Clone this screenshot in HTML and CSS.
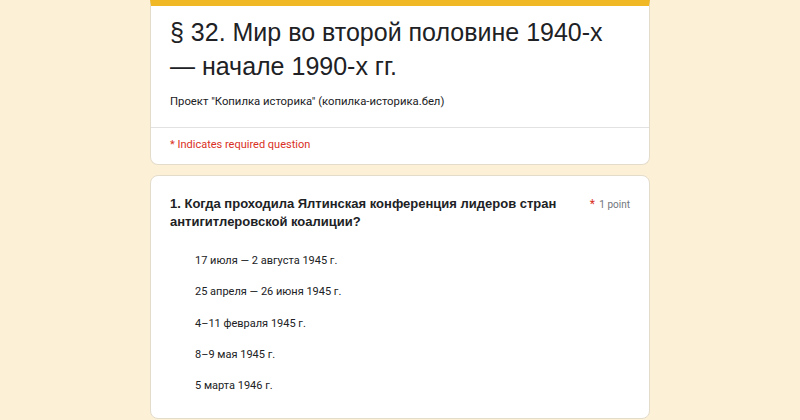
FILE: index.html
```html
<!DOCTYPE html>
<html lang="ru">
<head>
<meta charset="utf-8">
<title>§ 32</title>
<link rel="stylesheet" href="styles.css">
</head>
<body>
<main class="form">
  <section class="card header-card">
    <div class="header-main">
      <h1 class="title">§ 32. Мир во второй половине 1940-х — начале 1990-х гг.</h1>
      <p class="desc">Проект "Копилка историка" (копилка-историка.бел)</p>
    </div>
    <div class="header-note">* Indicates required question</div>
  </section>
  <section class="card question-card">
    <div class="q-head">
      <h2 class="q-title">1. Когда проходила Ялтинская конференция лидеров стран антигитлеровской коалиции?</h2>
      <div class="q-points"><span class="req">*</span> 1 point</div>
    </div>
    <ul class="options">
      <li>17 июля — 2 августа 1945 г.</li>
      <li>25 апреля — 26 июня 1945 г.</li>
      <li>4–11 февраля 1945 г.</li>
      <li>8–9 мая 1945 г.</li>
      <li>5 марта 1946 г.</li>
    </ul>
  </section>
</main>
</body>
</html>
```

FILE: styles.css
```css
html, body {
  margin: 0;
  padding: 0;
}
body {
  background: #fcf0d6;
  font-family: Roboto, "Liberation Sans", Arial, sans-serif;
  color: #202124;
  height: 420px;
  overflow: hidden;
}
.form {
  width: 500px;
  margin: 0 auto;
  display: flex;
  flex-direction: column;
  gap: 10px;
}
.card {
  background: #fff;
  border: 1px solid #e4dccb;
  border-radius: 8px;
}
.header-card {
  border-top: 6px solid #f1b826;
  border-top-left-radius: 0;
  border-top-right-radius: 0;
}
.header-main {
  padding: 9px 19px 18px;
  border-bottom: 1px solid #e2e2e2;
}
.title {
  margin: 0;
  font-family: "Liberation Sans", Arial, sans-serif;
  font-weight: 400;
  font-size: 25px;
  line-height: 34px;
  color: #202124;
}
.desc {
  margin: 12px 0 0;
  font-size: 11.3px;
  line-height: 14px;
}
.header-note {
  padding: 10px 19px 12px;
  font-size: 11px;
  line-height: 14px;
  color: #d93025;
}
.question-card {
  padding: 19px 19px 23px;
  min-height: 200px;
}
.q-head {
  display: flex;
  justify-content: space-between;
  align-items: flex-start;
  gap: 30px;
}
.q-title {
  margin: 0;
  font-family: "Liberation Sans", Arial, sans-serif;
  font-weight: 700;
  font-size: 13px;
  line-height: 18px;
  color: #202124;
}
.q-points {
  flex: none;
  font-size: 10px;
  color: #70757a;
  white-space: nowrap;
  padding-top: 2px;
}
.req {
  color: #d93025;
  font-size: 12px;
  margin-right: 2px;
}
.options {
  list-style: none;
  margin: 23px 0 0;
  padding: 0 0 0 25px;
  display: flex;
  flex-direction: column;
  gap: 17.3px;
}
.options li {
  font-size: 11px;
  line-height: 14px;
}
```
